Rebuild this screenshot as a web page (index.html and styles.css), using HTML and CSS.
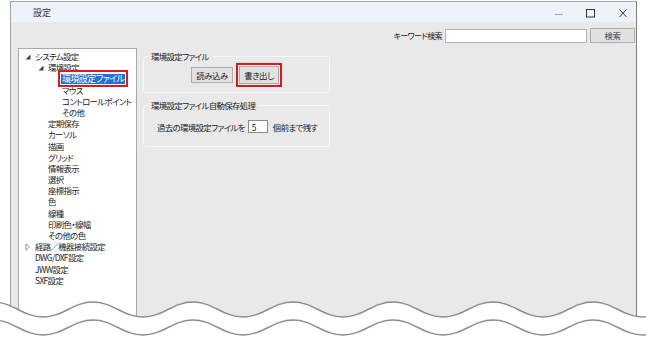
FILE: index.html
```html
<!DOCTYPE html>
<html lang="ja">
<head>
    <meta charset="UTF-8">
    <meta name="viewport" content="width=device-width, initial-scale=1.0">
    <title>設定</title>
    <link rel="stylesheet" href="styles.css">
</head>
<body class="shot">
    <div class="win">
        <!-- タイトルバー -->
        <div class="win-title">
            <span class="win-caption">設定</span>
            <div class="win-buttons">
                <svg class="win-btn" width="32" height="20" viewBox="0 0 32 20"><path d="M15 12.5h8" stroke="#a8a8a8" stroke-width="1"/></svg>
                <svg class="win-btn" width="32" height="20" viewBox="0 0 32 20"><rect x="14.5" y="7.5" width="8" height="7.5" fill="none" stroke="#333" stroke-width="1"/></svg>
                <svg class="win-btn" width="32" height="20" viewBox="0 0 32 20"><path d="M15.5 7.5l7 7.5M22.5 7.5l-7 7.5" stroke="#333" stroke-width="1"/></svg>
            </div>
        </div>

        <!-- キーワード検索 -->
        <div class="search-row">
            <label class="search-label" for="kw">キーワード検索</label>
            <input class="search-input" type="text" id="kw">
            <button class="btn search-btn">検索</button>
        </div>

        <div class="win-main">
            <!-- ツリー -->
            <ul class="tree">
                <li class="lv0"><svg class="tw" width="6" height="6" viewBox="0 0 6 6"><path d="M0.5 5.5H5.5V0.5Z" fill="#444"/></svg>システム設定</li>
                <li class="lv1"><svg class="tw" width="6" height="6" viewBox="0 0 6 6"><path d="M0.5 5.5H5.5V0.5Z" fill="#444"/></svg>環境設定</li>
                <li class="lv2"><span class="sel-mark"><span class="sel">環境設定ファイル</span></span></li>
                <li class="lv2">マウス</li>
                <li class="lv2">コントロールポイント</li>
                <li class="lv2">その他</li>
                <li class="lv1 leaf">定期保存</li>
                <li class="lv1 leaf">カーソル</li>
                <li class="lv1 leaf">描画</li>
                <li class="lv1 leaf">グリッド</li>
                <li class="lv1 leaf">情報表示</li>
                <li class="lv1 leaf">選択</li>
                <li class="lv1 leaf">座標指示</li>
                <li class="lv1 leaf">色</li>
                <li class="lv1 leaf">線種</li>
                <li class="lv1 leaf">印刷色・線幅</li>
                <li class="lv1 leaf">その他の色</li>
                <li class="lv0"><svg class="tw" width="6" height="8" viewBox="0 0 6 8"><path d="M1 0.8L4.6 4L1 7.2Z" fill="none" stroke="#8a8a8a" stroke-width="0.9"/></svg>経路／機器接続設定</li>
                <li class="lv0 leaf">DWG/DXF設定</li>
                <li class="lv0 leaf">JWW設定</li>
                <li class="lv0 leaf">SXF設定</li>
            </ul>

            <!-- 設定内容 -->
            <div class="pane">
                <fieldset class="group">
                    <legend class="group-title">環境設定ファイル</legend>
                    <div class="group-buttons">
                        <button class="btn file-btn">読み込み</button>
                        <span class="mark"><button class="btn file-btn file-btn-big">書き出し</button></span>
                    </div>
                </fieldset>

                <fieldset class="group group-auto">
                    <legend class="group-title">環境設定ファイル自動保存処理</legend>
                    <div class="keep-row">
                        <span>過去の環境設定ファイルを</span>
                        <input class="keep-input" type="text" value="5">
                        <span>個前まで残す</span>
                    </div>
                </fieldset>
            </div>
        </div>
    </div>

    <!-- 切り取り線 -->
    <svg class="cut" width="646" height="47" viewBox="0 0 646 47">
        <path d="M-107 7C-87 7 -77 22 -57 22S-27 7 -7 7S23 22 43 22S73 7 93 7S123 22 143 22S173 7 193 7S223 22 243 22S273 7 293 7S323 22 343 22S373 7 393 7S423 22 443 22S473 7 493 7S523 22 543 22S573 7 593 7S623 22 643 22S673 7 693 7L693 47L-107 47Z" fill="#fff"/>
        <path d="M-107 7C-87 7 -77 22 -57 22S-27 7 -7 7S23 22 43 22S73 7 93 7S123 22 143 22S173 7 193 7S223 22 243 22S273 7 293 7S323 22 343 22S373 7 393 7S423 22 443 22S473 7 493 7S523 22 543 22S573 7 593 7S623 22 643 22S673 7 693 7" fill="none" stroke="#8c8c8c" stroke-width="1.4"/>
        <path d="M-107 25C-87 25 -77 40 -57 40S-27 25 -7 25S23 40 43 40S73 25 93 25S123 40 143 40S173 25 193 25S223 40 243 40S273 25 293 25S323 40 343 40S373 25 393 25S423 40 443 40S473 25 493 25S523 40 543 40S573 25 593 25S623 40 643 40S673 25 693 25" fill="none" stroke="#8c8c8c" stroke-width="1.4"/>
    </svg>
</body>
</html>
```

FILE: styles.css
```css
/* 基本 */
.shot {
    margin: 0;
    width: 646px;
    height: 342px;
    overflow: hidden;
    position: relative;
    background: #ffffff;
    font-family: "Noto Sans CJK JP", "Noto Sans", sans-serif;
    font-feature-settings: "palt";
    font-size: 8.4px;
    letter-spacing: -0.6px;
    color: #222;
}

/* ウィンドウ */
.win {
    box-sizing: border-box;
    margin: 1px 0 0 10px;
    width: 627px;
    height: 341px;
    overflow: hidden;
    background: #e9e9e9;
    border: 1px solid #a4a4a4;
    border-bottom: none;
    border-right-color: #7c7c7c;
    display: flex;
    flex-direction: column;
}

.win-title {
    height: 20px;
    flex: none;
    background: #eef3fa;
    display: flex;
    align-items: center;
    justify-content: space-between;
    padding-left: 22px;
}

.win-caption {
    font-size: 9px;
    letter-spacing: 0;
    color: #333;
}

.win-buttons {
    display: flex;
}

.win-btn {
    display: block;
}

/* 検索 */
.search-row {
    display: flex;
    justify-content: flex-end;
    align-items: center;
    gap: 2px;
    margin-top: 6px;
    padding-right: 1px;
}

.search-label {
    font-size: 8px;
    margin-right: 1px;
}

.search-input {
    box-sizing: border-box;
    width: 142px;
    height: 14px;
    margin: 0 1px 0 0;
    border: 1px solid #b4b4b4;
    background: #fff;
    padding: 0;
}

.btn {
    box-sizing: border-box;
    font-family: inherit;
    font-feature-settings: "palt";
    font-size: 8.4px;
    letter-spacing: -0.4px;
    color: #222;
    background: #e1e1e1;
    border: 1px solid #adadad;
    padding: 0;
    margin: 0;
    line-height: 1;
}

.search-btn {
    width: 45px;
    height: 15px;
    color: #444;
}

/* メイン */
.win-main {
    display: flex;
    margin-top: 5px;
    flex: 1;
    min-height: 0;
}

.tree {
    box-sizing: border-box;
    list-style: none;
    margin: 0 0 0 7px;
    padding: 2px 0 0 0;
    width: 119px;
    background: #fff;
    border: 1px solid #a9a9a9;
    border-bottom: none;
}

.tree li {
    height: 11.2px;
    line-height: 11.2px;
    white-space: nowrap;
    display: flex;
    align-items: center;
}

.tw {
    flex: none;
    margin-right: 4px;
}

.lv0 { padding-left: 6px; }
.lv1 { padding-left: 19px; }
.lv2 { padding-left: 43px; }
.lv0.leaf { padding-left: 16px; }
.lv1.leaf { padding-left: 29px; }

.sel-mark {
    margin-left: -4px;
    border: 2px solid #e8141c;
    padding: 0 1px;
    height: 13px;
    display: flex;
    align-items: center;
    background: #fff;
    position: relative;
    z-index: 1;
}

.sel {
    background: #1a73d9;
    color: #fff;
    line-height: 10.5px;
    padding: 0 1px;
    font-size: 9px;
}

/* 右側 */
.pane {
    padding-left: 6px;
}

.group {
    box-sizing: border-box;
    width: 187px;
    margin: 3px 0 0 0;
    padding: 1px 0 5px 0;
    border: 1px solid #f7f7f7;
    border-radius: 3px;
}

.group-title {
    margin-left: 4px;
    padding: 0 3px;
    line-height: 11px;
}

.group-buttons {
    display: flex;
    justify-content: center;
    align-items: center;
    gap: 3px;
}

.file-btn {
    width: 42px;
    height: 16px;
}

.mark {
    display: block;
    border: 2px solid #e8141c;
    padding: 1px;
    background: #f4f4f4;
}

.file-btn-big {
    width: 40px;
    height: 18px;
}

.group-auto {
    margin-top: 7px;
    padding: 9px 0 13px 0;
}

.keep-row {
    display: flex;
    align-items: center;
    white-space: nowrap;
    padding-left: 13px;
}

.keep-input {
    box-sizing: border-box;
    flex: none;
    width: 20px;
    height: 13px;
    margin: 0 5px 0 3px;
    border: 1px solid #8a8a8a;
    background: #fff;
    padding: 0 0 0 3px;
    font-family: inherit;
    font-size: 8.4px;
    color: #222;
}

/* 切り取り線 */
.cut {
    position: absolute;
    left: 0;
    top: 295px;
}
```
